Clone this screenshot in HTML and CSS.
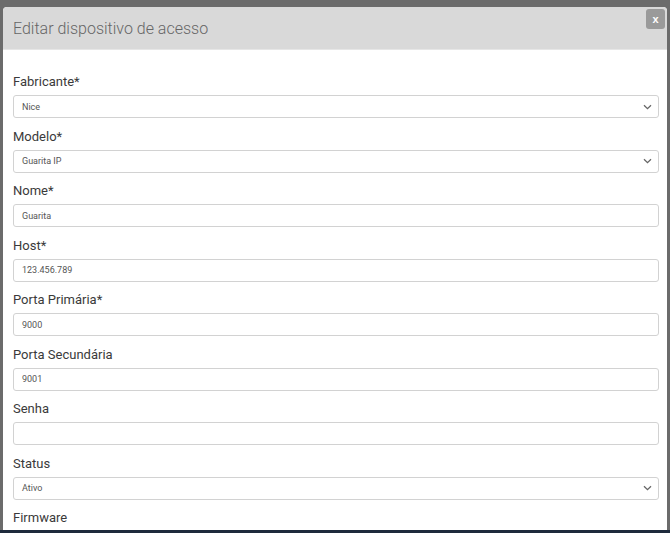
FILE: index.html
```html
<!DOCTYPE html>
<html lang="pt-BR">
<head>
<meta charset="utf-8">
<title>Editar dispositivo de acesso</title>
<link rel="stylesheet" href="styles.css">
</head>
<body>
<div class="screen">
  <div class="modal">
    <div class="modal-header">
      <h1 class="modal-title">Editar dispositivo de acesso</h1>
      <button class="close-btn" type="button">x</button>
    </div>
    <div class="modal-body">
      <div class="field">
        <label class="label">Fabricante*</label>
        <div class="control select"><span>Nice</span><svg class="chev" width="9" height="6" viewBox="0 0 9 6"><path d="M1 1.2l3.5 3.5 3.5-3.5" fill="none" stroke="#666" stroke-width="1.3"/></svg></div>
      </div>
      <div class="field">
        <label class="label">Modelo*</label>
        <div class="control select"><span>Guarita IP</span><svg class="chev" width="9" height="6" viewBox="0 0 9 6"><path d="M1 1.2l3.5 3.5 3.5-3.5" fill="none" stroke="#666" stroke-width="1.3"/></svg></div>
      </div>
      <div class="field">
        <label class="label">Nome*</label>
        <div class="control"><span>Guarita</span></div>
      </div>
      <div class="field">
        <label class="label">Host*</label>
        <div class="control"><span>123.456.789</span></div>
      </div>
      <div class="field">
        <label class="label">Porta Primária*</label>
        <div class="control"><span>9000</span></div>
      </div>
      <div class="field">
        <label class="label">Porta Secundária</label>
        <div class="control"><span>9001</span></div>
      </div>
      <div class="field">
        <label class="label">Senha</label>
        <div class="control"><span></span></div>
      </div>
      <div class="field">
        <label class="label">Status</label>
        <div class="control select"><span>Ativo</span><svg class="chev" width="9" height="6" viewBox="0 0 9 6"><path d="M1 1.2l3.5 3.5 3.5-3.5" fill="none" stroke="#666" stroke-width="1.3"/></svg></div>
      </div>
      <div class="field">
        <label class="label">Firmware</label>
        <div class="control"><span></span></div>
      </div>
    </div>
  </div>
  <div class="taskbar"></div>
</div>
</body>
</html>
```

FILE: styles.css
```css
html, body {
  margin: 0;
  padding: 0;
  height: 533px;
  overflow: hidden;
}
body {
  background: #6b6b6b;
  font-family: Roboto, "Liberation Sans", Arial, sans-serif;
}
.screen {
  position: relative;
  height: 533px;
  padding: 7px 3px 0 3px;
  box-sizing: border-box;
  overflow: hidden;
}
.modal {
  background: #ffffff;
  border-radius: 4px 4px 0 0;
  overflow: hidden;
  height: 540px;
}
.modal-header {
  background: #d9d9d9;
  height: 43px;
  display: flex;
  align-items: center;
  justify-content: space-between;
  padding: 0 2px 0 10px;
  box-sizing: border-box;
  border-bottom: 1px solid #e6e6e6;
}
.modal-title {
  margin: 0;
  font-size: 16px;
  font-weight: 300;
  color: #666666;
}
.close-btn {
  align-self: flex-start;
  margin-top: 2px;
  width: 19px;
  height: 20px;
  border: none;
  border-radius: 3px;
  background: #9a9a9a;
  color: #ffffff;
  font-family: "Liberation Sans", Arial, sans-serif;
  font-weight: bold;
  font-size: 11px;
  line-height: 18px;
  padding: 0;
  text-align: center;
}
.modal-body {
  padding: 23px 8px 0 10px;
}
.field {
  margin-bottom: 9.5px;
}
.label {
  display: block;
  font-size: 13px;
  line-height: 18px;
  color: #3a3a3a;
  margin-bottom: 4px;
}
.control {
  height: 23px;
  border: 1px solid #d2d2d2;
  border-radius: 3px;
  box-sizing: border-box;
  display: flex;
  align-items: center;
  justify-content: space-between;
  padding: 0 4px 0 8px;
  font-size: 9px;
  color: #555555;
}
.chev {
  margin-right: 2px;
}
.taskbar {
  position: absolute;
  left: 0;
  right: 0;
  bottom: 0;
  height: 3px;
  background: #1e2a3c;
}
```
